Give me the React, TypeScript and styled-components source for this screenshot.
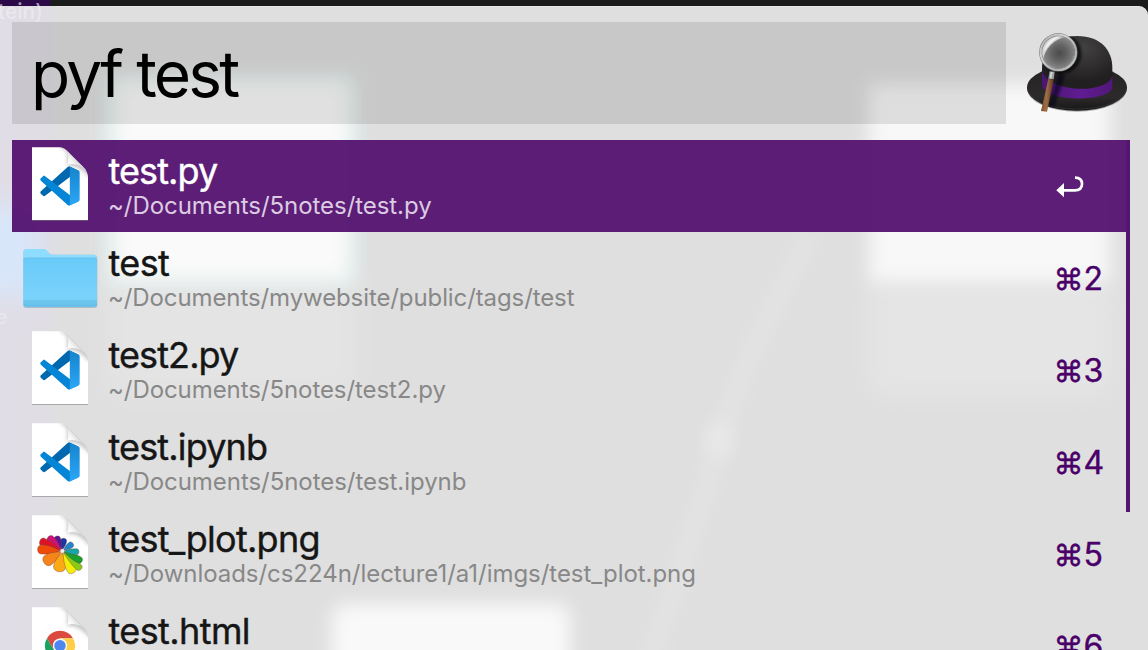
import React from "react";
import styled, { createGlobalStyle } from "styled-components";

const GlobalStyle = createGlobalStyle`
  html, body { margin: 0; padding: 0; overflow: hidden; }
  body { font-family: Inter, "Liberation Sans", sans-serif; background: #1c1b1c; }
  * { box-sizing: border-box; }
`;

const Desktop = styled.div`
  position: relative;
  width: 1148px;
  height: 650px;
  padding-top: 6px;
  overflow: hidden;
  background: linear-gradient(to right, #2c0a4a 50px, #1c1b1c 50px);
`;

const Panel = styled.main`
  position: relative;
  height: 644px;
  overflow: hidden;
  border-radius: 0 9px 0 0;
  background: #dfdfdf;
  box-shadow: inset 0 1px 0 rgba(255, 255, 255, 0.25);
`;

const Backdrop = styled.svg`
  position: absolute;
  left: 0;
  top: -6px;
`;

const GhostText = styled.span<{ $top: number; $left: number; $size: number; $alpha: number }>`
  position: absolute;
  left: ${(p) => p.$left}px;
  top: ${(p) => p.$top}px;
  font-size: ${(p) => p.$size}px;
  font-weight: 500;
  line-height: 24px;
  color: rgba(255, 255, 255, ${(p) => p.$alpha});
`;

const Content = styled.div`
  position: relative;
  display: flex;
  flex-direction: column;
  gap: 16px;
  padding: 16px 18px 0 12px;
`;

const SearchBar = styled.header`
  display: flex;
  align-items: flex-start;
  justify-content: space-between;
  height: 102px;
`;

const SearchField = styled.div`
  width: 994px;
  height: 102px;
  padding-left: 19px;
  background: rgba(0, 0, 0, 0.1);
  color: #000;
  font-size: 64px;
  font-weight: 400;
  line-height: 104px;
  letter-spacing: -2.8px;
  white-space: pre;
`;

const HatSlot = styled.div`
  margin: 9px 1px 0 0;
  height: 82px;
`;

const ResultArea = styled.section`
  display: flex;
  align-items: flex-start;
`;

const ResultList = styled.ul`
  flex: 1;
  margin: 0;
  padding: 0;
  list-style: none;
`;

const Row = styled.li<{ $selected?: boolean }>`
  display: grid;
  grid-template-columns: 96px 1fr 70px;
  height: 92px;
  background: ${(p) => (p.$selected ? "rgba(83, 18, 112, 0.95)" : "transparent")};
  color: ${(p) => (p.$selected ? "#fff" : "#161616")};
`;

const IconCell = styled.div<{ $offset: number }>`
  display: flex;
  align-items: flex-start;
  justify-content: center;
  padding-top: ${(p) => p.$offset}px;
`;

const Labels = styled.div`
  display: flex;
  flex-direction: column;
  padding-top: 9px;
  white-space: nowrap;
`;

const Title = styled.span<{ $spacing: number }>`
  padding-left: 0.5px;
  font-size: 36px;
  font-weight: 400;
  -webkit-text-stroke: 0.4px currentColor;
  line-height: 44px;
  letter-spacing: ${(p) => p.$spacing}px;
`;

const Path = styled.span<{ $selected?: boolean; $spacing: number }>`
  margin-top: -2px;
  font-size: 24px;
  line-height: 30px;
  letter-spacing: ${(p) => p.$spacing}px;
  color: ${(p) => (p.$selected ? "#dccbe2" : "#888")};
`;

const Shortcut = styled.div`
  display: flex;
  align-items: baseline;
  margin-left: -2.5px;
  padding-top: 27px;
  color: #4a0068;
  font-size: 32px;
  font-weight: 400;
  -webkit-text-stroke: 0.4px currentColor;
  line-height: 39px;
  white-space: nowrap;
`;

const CommandKey = styled.span`
  font-size: 30px;
`;

const ReturnSlot = styled.div`
  padding-top: 35px;
`;

const ScrollThumb = styled.div`
  width: 4px;
  height: 372px;
  background: rgba(75, 8, 105, 0.94);
`;

function Blobs() {
  return (
    <Backdrop width="1148" height="650" viewBox="0 0 1148 650">
      <defs>
        <filter id="soft" x="-30%" y="-30%" width="160%" height="160%">
          <feGaussianBlur stdDeviation="9" />
        </filter>
        <filter id="wide" x="-50%" y="-50%" width="200%" height="200%">
          <feGaussianBlur stdDeviation="14" />
        </filter>
        <linearGradient id="edge" x1="0" x2="1" y1="0" y2="0">
          <stop offset="0" stopColor="#e1dde6" />
          <stop offset="0.72" stopColor="#e0dde4" />
          <stop offset="1" stopColor="#e0dde4" stopOpacity="0" />
        </linearGradient>
      </defs>
      <rect x="0" y="0" width="62" height="650" fill="url(#edge)" />
      <rect x="-30" y="205" width="70" height="92" fill="#d8e6fa" filter="url(#wide)" />
      <rect x="106" y="280" width="250" height="115" fill="#e4e4e4" filter="url(#wide)" />
      <rect x="104" y="76" width="253" height="208" fill="#e0edec" filter="url(#soft)" />
      <rect x="115" y="80" width="234" height="200" fill="#f9faf9" filter="url(#soft)" />
      <rect x="870" y="280" width="242" height="115" fill="#e5e5e5" filter="url(#wide)" />
      <rect x="869" y="84" width="241" height="198" fill="#f8f8f8" filter="url(#soft)" />
      <rect x="332" y="604" width="238" height="80" rx="14" fill="#f9f9f9" filter="url(#soft)" />
      <path d="M812 235Q745 350 720 440T650 660" stroke="#e4e4e4" strokeWidth="16" fill="none" filter="url(#soft)" />
      <ellipse cx="719" cy="440" rx="13" ry="17" fill="#e9e9e9" filter="url(#soft)" />
    </Backdrop>
  );
}

function HatIcon() {
  return (
    <svg width="104" height="82" viewBox="75 90 312 246" style={{ display: "block" }}>
      <defs>
        <linearGradient id="brim" x1="0" x2="0" y1="0" y2="1">
          <stop offset="0" stopColor="#232122" />
          <stop offset="0.7" stopColor="#2c2a2b" />
          <stop offset="1" stopColor="#171616" />
        </linearGradient>
        <radialGradient id="crown" cx="0.58" cy="0.22" r="0.6">
          <stop offset="0" stopColor="#434242" />
          <stop offset="1" stopColor="#221f20" />
        </radialGradient>
        <linearGradient id="band" x1="0" x2="1" y1="0" y2="0">
          <stop offset="0" stopColor="#4b1672" />
          <stop offset="0.55" stopColor="#601c92" />
          <stop offset="1" stopColor="#501779" />
        </linearGradient>
        <radialGradient id="glass">
          <stop offset="0" stopColor="#4b4b4b" />
          <stop offset="0.45" stopColor="#626262" />
          <stop offset="1" stopColor="#8a8a8a" />
        </radialGradient>
        <linearGradient id="rim" x1="0" x2="1" y1="0" y2="1">
          <stop offset="0" stopColor="#a6a8aa" />
          <stop offset="0.35" stopColor="#d3d5d6" />
          <stop offset="0.7" stopColor="#a9abad" />
          <stop offset="1" stopColor="#d6d7d8" />
        </linearGradient>
        <linearGradient id="wood" x1="0" x2="1" y1="0" y2="0.15">
          <stop offset="0" stopColor="#67401f" />
          <stop offset="0.5" stopColor="#a06f47" />
          <stop offset="1" stopColor="#5a361b" />
        </linearGradient>
        <filter id="shade" x="-40%" y="-40%" width="180%" height="180%">
          <feGaussianBlur stdDeviation="5" />
        </filter>
        <clipPath id="hatShape">
          <path d="M126 207C126 145 164 105 232 105C302 105 337 148 337 209C365 218 381 238 381 260C381 301 316 329 231 329C146 329 81 301 81 260C81 238 97 219 126 207Z" />
        </clipPath>
        <clipPath id="lens">
          <circle cx="175" cy="154" r="48" />
        </clipPath>
      </defs>
      <ellipse cx="231" cy="264" rx="149" ry="68" fill="#777" opacity="0.6" />
      <ellipse cx="231" cy="260" rx="150" ry="69" fill="url(#brim)" />
      <path d="M84 270C98 304 160 324 231 324S364 304 378 270" fill="none" stroke="#3b393a" strokeWidth="2" />
      <path d="M126 240V205C126 145 164 105 232 105C302 105 337 148 337 200V240C318 280 148 282 126 240Z" fill="url(#crown)" />
      <path d="M126 208C142 278 323 280 337 224V262C323 303 142 305 126 255Z" fill="url(#band)" />
      <g clipPath="url(#hatShape)">
        <g filter="url(#shade)">
          <circle cx="184" cy="158" r="53" fill="none" stroke="#080808" strokeWidth="14" opacity="0.7" />
          <path d="M185 220L153 318" stroke="#080610" strokeWidth="20" opacity="0.6" />
        </g>
      </g>
      <circle cx="175" cy="154" r="49" fill="#d4d4d2" />
      <path d="M127 184C134 142 162 111 209 106L230 145L213 193L176 207Z" fill="url(#glass)" clipPath="url(#lens)" />
      <path d="M131 152C139 123 157 107 183 106C164 114 149 127 131 152Z" fill="#f2f2f1" />
      <circle cx="175" cy="154" r="53" fill="none" stroke="#77797b" strokeWidth="9" />
      <circle cx="175" cy="154" r="53" fill="none" stroke="url(#rim)" strokeWidth="6" />
      <path d="M149 211L164 212L161 235L145 233Z" fill="#9c9fa2" />
      <path d="M152 213L158 213L154 232L149 231Z" fill="#d5d6d7" />
      <path d="M145 234L161 235L141 332L123 330Z" fill="url(#wood)" />
    </svg>
  );
}

const pageOutline = "M96 22H180C190 22 198 29 205 36L250 81C259 90 264 101 264 112V241H96Z";

function PageIcon({ id, children }: { id: string; children: React.ReactNode }) {
  return (
    <svg width="60" height="78" viewBox="90 15 180 234">
      <defs>
        <linearGradient id={`${id}-curl`} gradientUnits="userSpaceOnUse" x1="205" y1="74" x2="228" y2="54">
          <stop offset="0" stopColor="#fff" />
          <stop offset="0.5" stopColor="#f4f4f4" />
          <stop offset="1" stopColor="#d6d6d6" />
        </linearGradient>
        <filter id={`${id}-drop`} x="-10%" y="-10%" width="120%" height="120%">
          <feGaussianBlur stdDeviation="2" />
        </filter>
        <filter id={`${id}-fade`} x="-60%" y="-60%" width="220%" height="220%">
          <feGaussianBlur stdDeviation="7" />
        </filter>
        <clipPath id={`${id}-page`}>
          <path d={pageOutline} />
        </clipPath>
      </defs>
      <path d={pageOutline} transform="translate(0 2)" fill="#000" opacity="0.36" filter={`url(#${id}-drop)`} />
      <path d={pageOutline} fill="#fff" />
      <g clipPath={`url(#${id}-page)`}>
        <path d="M182 16L206 34V73Q240 72 266 104V92L206 28Z" fill="#000" stroke="#000" strokeWidth="7" opacity="0.26" filter={`url(#${id}-fade)`} />
      </g>
      <path d="M204 36C205 50 205 62 203 74C222 69 242 74 257 91C252 83 247 79 240 72Z" fill={`url(#${id}-curl)`} />
      {children}
    </svg>
  );
}

function CodeMark({ id }: { id: string }) {
  return (
    <g transform="translate(121 79) scale(1.18)">
      <defs>
        <linearGradient id={`${id}-fin`} x1="0" x2="0" y1="0" y2="1">
          <stop offset="0" stopColor="#1683cd" />
          <stop offset="1" stopColor="#2ba7f7" />
        </linearGradient>
      </defs>
      <path fill="#0068af" d="M96.46 10.8L75.86.88C73.47-.27 70.62.21 68.75 2.08L1.3 63.58C-.52 65.24-.51 68.09 1.3 69.75L6.81 74.75C8.3 76.1 10.53 76.2 12.13 74.99L93.36 13.37C96.09 11.3 100 13.25 100 16.67V16.43C100 14.03 98.62 11.84 96.46 10.8Z" />
      <path fill="#0585d5" d="M96.46 89.2L75.86 99.12C73.47 100.27 70.62 99.79 68.75 97.92L1.3 36.42C-.52 34.76-.51 31.91 1.3 30.25L6.81 25.25C8.3 23.9 10.53 23.8 12.13 25.01L93.36 86.63C96.09 88.7 100 86.75 100 83.33V83.57C100 85.97 98.62 88.16 96.46 89.2Z" />
      <path fill={`url(#${id}-fin)`} d="M75.86 99.13C73.47 100.27 70.62 99.79 68.75 97.92C71.06 100.22 75 98.59 75 95.33V4.67C75 1.41 71.06-.22 68.75 2.08C70.62.21 73.47-.27 75.86.87L96.46 10.78C98.62 11.82 100 14.01 100 16.41V83.59C100 85.99 98.62 88.18 96.46 89.22Z" />
    </g>
  );
}

// Petals fan out from the hub: tip position, half width and colour.
const petals: [number, number, number, string][] = [
  [192, 91, 9, "#1936a8"],
  [168, 85, 10, "#5a1694"],
  [145, 86, 11, "#ca1277"],
  [120, 98, 12, "#dc1324"],
  [113, 123, 14, "#ee4b0b"],
  [132, 164, 17, "#f7841a"],
  [176, 191, 18, "#fba915"],
  [220, 195, 14, "#f4ed0a"],
  [243, 184, 10, "#8acb18"],
  [246, 160, 10, "#18a12c"],
  [237, 132, 9, "#14a6a8"],
  [219, 106, 9, "#2383cc"],
];

function PinwheelMark() {
  return (
    <g>
      {petals.map(([x, y, w, color]) => {
        const dx = x - 187;
        const dy = y - 129;
        const len = Math.hypot(dx, dy);
        const angle = (Math.atan2(dy, dx) * 180) / Math.PI;
        return (
          <g key={color} transform={`translate(187 129) rotate(${angle})`}>
            <path
              d={`M4 0C${len * 0.4} ${-w * 0.7} ${len * 0.55} ${-w} ${len - w * 0.8} ${-w}C${len + w * 0.27} ${-w} ${len + w * 0.27} ${w} ${len - w * 0.8} ${w}C${len * 0.55} ${w} ${len * 0.4} ${w * 0.7} 4 0Z`}
              fill={color}
              stroke="#6d4433"
              strokeOpacity="0.55"
              strokeWidth="2"
            />
          </g>
        );
      })}
      <circle cx="187" cy="129" r="6" fill="#f4ecf2" />
    </g>
  );
}

function ChromeMark() {
  return (
    <g>
      <rect x="124" y="84" width="112" height="112" rx="24" fill="#fff" stroke="#f6f6f6" strokeWidth="2" />
      <g transform="translate(180 137)">
        <circle r="45" fill="#fff" />
        <path d="M-39 -22.5A45 45 0 0 1 39 -22.5H0L-19.5 11.2Z" fill="#db4a3f" />
        <path d="M39 -22.5A45 45 0 0 1 0 45L19.5 11.2L0 -22.5Z" fill="#ffcd46" />
        <path d="M-39 -22.5A45 45 0 0 0 0 45L19.5 11.2H-19.5Z" fill="#1aa261" />
        <circle r="21.5" fill="#f4f4f4" />
        <circle r="17" fill="#4c86ee" />
      </g>
    </g>
  );
}

function FolderIcon() {
  return (
    <svg width="76" height="62" viewBox="66 45 228 186">
      <defs>
        <linearGradient id="folderFront" x1="0" x2="0" y1="0" y2="1">
          <stop offset="0" stopColor="#69caf8" />
          <stop offset="0.85" stopColor="#7bd3fb" />
          <stop offset="0.87" stopColor="#6ec7ef" />
          <stop offset="1" stopColor="#68c1ec" />
        </linearGradient>
      </defs>
      <path d="M70 62Q70 51 81 51H128Q136 51 142 58C147 65 151 68 158 68H281Q292 68 292 79V220Q292 228 284 228H78Q70 228 70 220Z" fill="#7f9aa6" opacity="0.5" />
      <path d="M70 62Q70 51 81 51H128Q136 51 142 58C147 65 151 68 158 68H280Q291 68 291 79V217Q291 225 283 225H78Q70 225 70 217Z" fill="#8edcfe" />
      <path d="M70 84Q70 77 78 77H283Q291 77 291 84V216Q291 224 283 224H78Q70 224 70 216Z" fill="url(#folderFront)" />
      <path d="M71 84Q72 78 78 78H283Q289 78 290 84M72 216Q73 222 79 222H282Q289 222 290 216" fill="none" stroke="#52abd9" strokeWidth="1.6" opacity="0.7" />
    </svg>
  );
}

function ReturnIcon() {
  return (
    <svg width="28" height="24" viewBox="108 135 84 72">
      <path d="M130 181H164C180 181 186 173 186 162S179 143 165 143" fill="none" stroke="#fff" strokeWidth="8" />
      <path d="M109 181L132 159V202Z" fill="#fff" />
    </svg>
  );
}

type Kind = "code" | "folder" | "image" | "web";

interface Result {
  title: string;
  path?: string;
  kind: Kind;
  digit?: string;
  titleSpacing: number;
  pathSpacing?: number;
}

const results: Result[] = [
  { title: "test.py", path: "~/Documents/5notes/test.py", kind: "code", titleSpacing: -0.9, pathSpacing: -0.06 },
  { title: "test", path: "~/Documents/mywebsite/public/tags/test", kind: "folder", digit: "2", titleSpacing: -0.6, pathSpacing: -0.1 },
  { title: "test2.py", path: "~/Documents/5notes/test2.py", kind: "code", digit: "3", titleSpacing: -0.9, pathSpacing: -0.07 },
  { title: "test.ipynb", path: "~/Documents/5notes/test.ipynb", kind: "code", digit: "4", titleSpacing: -0.85, pathSpacing: -0.05 },
  { title: "test_plot.png", path: "~/Downloads/cs224n/lecture1/a1/imgs/test_plot.png", kind: "image", digit: "5", titleSpacing: -0.72, pathSpacing: -0.04 },
  { title: "test.html", kind: "web", digit: "6", titleSpacing: -0.6 },
];

function FileIcon({ kind, id }: { kind: Kind; id: string }) {
  if (kind === "folder") return <FolderIcon />;
  return (
    <PageIcon id={id}>
      {kind === "code" && <CodeMark id={id} />}
      {kind === "image" && <PinwheelMark />}
      {kind === "web" && <ChromeMark />}
    </PageIcon>
  );
}

export default function App() {
  return (
    <Desktop>
      <GlobalStyle />
      <GhostText $left={-2} $top={0} $size={21} $alpha={0.6}>tein)</GhostText>
      <Panel>
        <Blobs />
        <GhostText $left={-2} $top={-6} $size={21} $alpha={0.35}>tein)</GhostText>
        <GhostText $left={-4} $top={300} $size={19} $alpha={0.3}>e</GhostText>
        <Content>
          <SearchBar>
            <SearchField>pyf test</SearchField>
            <HatSlot>
              <HatIcon />
            </HatSlot>
          </SearchBar>
          <ResultArea>
            <ResultList>
              {results.map((r, i) => (
                <Row key={r.title} $selected={i === 0}>
                  <IconCell $offset={r.kind === "folder" ? 15 : 5}>
                    <FileIcon kind={r.kind} id={`file${i}`} />
                  </IconCell>
                  <Labels>
                    <Title $spacing={r.titleSpacing}>{r.title}</Title>
                    {r.path && (
                      <Path $selected={i === 0} $spacing={r.pathSpacing ?? 0}>
                        {r.path}
                      </Path>
                    )}
                  </Labels>
                  {r.digit ? (
                    <Shortcut>
                      <CommandKey>⌘</CommandKey>
                      {r.digit}
                    </Shortcut>
                  ) : (
                    <ReturnSlot>
                      <ReturnIcon />
                    </ReturnSlot>
                  )}
                </Row>
              ))}
            </ResultList>
            <ScrollThumb />
          </ResultArea>
        </Content>
      </Panel>
    </Desktop>
  );
}
